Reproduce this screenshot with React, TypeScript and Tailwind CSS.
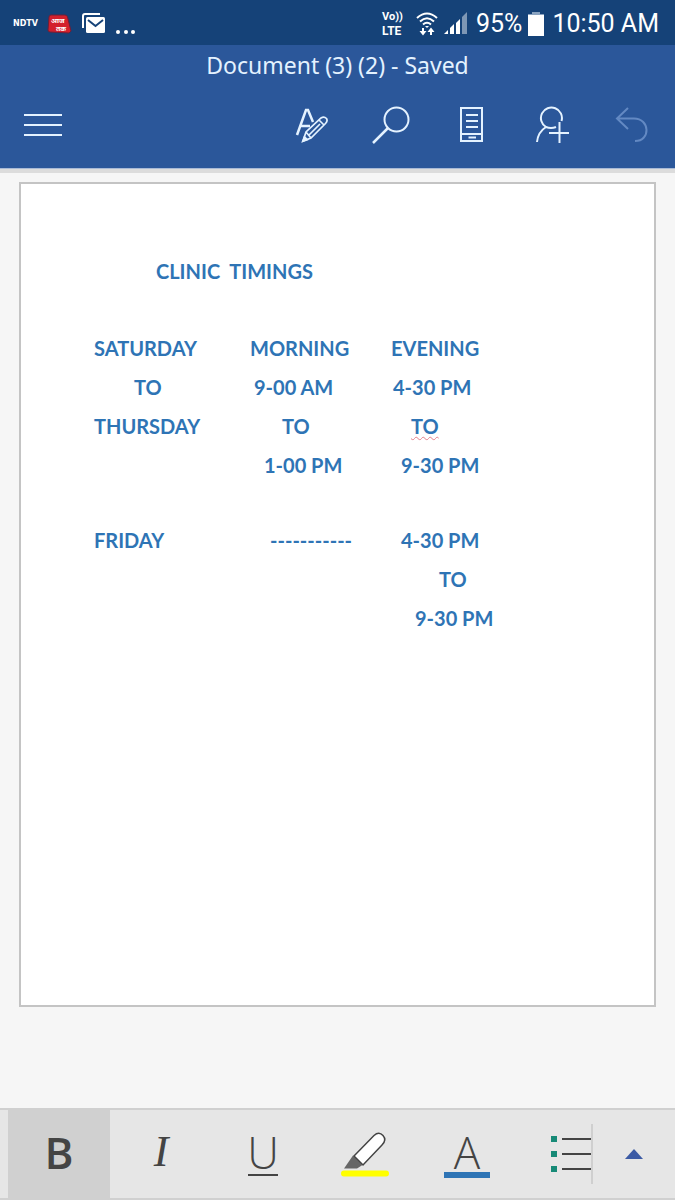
import { useState } from 'react';
import clsx from 'clsx';

interface Entry {
  text: string;
  indent?: string;
  misspelled?: boolean;
}

const weekdays: Entry[][] = [
  [{ text: 'SATURDAY' }, { text: 'MORNING' }, { text: 'EVENING' }],
  [{ text: 'TO', indent: 'pl-10' }, { text: '9-00 AM', indent: 'pl-1' }, { text: '4-30 PM', indent: 'pl-0.5' }],
  [
    { text: 'THURSDAY' },
    { text: 'TO', indent: 'pl-8' },
    { text: 'TO', indent: 'pl-5', misspelled: true },
  ],
  [{ text: '' }, { text: '1-00 PM', indent: 'pl-3.5' }, { text: '9-30 PM', indent: 'pl-2.5' }],
];

const friday: Entry[][] = [
  [{ text: 'FRIDAY' }, { text: '-----------', indent: 'pl-5' }, { text: '4-30 PM', indent: 'pl-2.5' }],
  [{ text: '' }, { text: '' }, { text: 'TO', indent: 'pl-12' }],
  [{ text: '' }, { text: '' }, { text: '9-30 PM', indent: 'pl-6' }],
];

function StatusBar() {
  return (
    <div className="flex h-[45px] items-center justify-between bg-[#154278] pl-[13px] pr-4 pt-0.5 text-white">
      <div className="flex items-center">
        <span className="w-[34px] font-['DejaVu_Sans',sans-serif] text-[8px] font-bold">NDTV</span>
        <svg width="25" height="20" viewBox="0 0 25 20" role="img" aria-label="Aaj Tak">
          <path d="M4 1L18 1Q20 1 20.500 3L24 17L22 19L3 18Q1 18 1 16L2 3Q2 1 4 1Z" fill="#d3202c" stroke="#6d1f38" />
          <text x="4" y="9" fontSize="7" fontWeight="700" fill="#fff" fontFamily="Noto Sans, sans-serif">आज</text>
          <text x="9" y="17" fontSize="7" fontWeight="700" fill="#fff" fontFamily="Noto Sans, sans-serif">तक</text>
        </svg>
        <svg className="ml-2.5" width="24" height="21" viewBox="0 0 24 21" fill="none">
          <path d="M1 15V3Q1 1 3 1H18" stroke="#fff" strokeWidth="2" />
          <rect x="4" y="4" width="19" height="16" rx="1.500" fill="#fff" />
          <path d="M6 7L13.500 13L21 7" stroke="#154278" strokeWidth="2" />
        </svg>
        <svg className="ml-2.5 mt-4" width="20" height="4" viewBox="0 0 20 4" fill="#fff">
          <circle cx="2" cy="2" r="2" />
          <circle cx="10" cy="2" r="2" />
          <circle cx="17" cy="2" r="2" />
        </svg>
      </div>

      <div className="flex items-center font-[Roboto,sans-serif] text-[25px]">
        <div className="flex w-6 flex-col text-[12px] font-bold leading-[14px]">
          <span className="whitespace-nowrap text-[11px]">Vo))</span>
          <span>LTE</span>
        </div>
        <svg className="ml-2.5" width="22" height="24" viewBox="0 0 22 24" fill="none" stroke="#fff" strokeWidth="2">
          <path d="M1 6Q11 -3 21 6" />
          <path d="M4 9.500Q11 3 18 9.500" />
          <path d="M7 12.500Q11 9 15 12.500" />
          <path d="M9 14H13L11 16Z" fill="#fff" stroke="none" />
          <path d="M7 16V20M15 23V19" />
          <path d="M3.500 19H10.500L7 23.500ZM11.500 20H18.500L15 15.500Z" fill="#fff" stroke="none" />
        </svg>
        <svg className="ml-1.5" width="24" height="23" viewBox="0 0 24 23" fill="#fff">
          <path d="M0 22L4 18V22Z" />
          <path d="M6 16L10 12V22H6Z" />
          <path d="M12 11L16 7V22H12Z" />
          <path d="M18 5L23 0V22H18Z" opacity=".45" />
        </svg>
        <span className="ml-2">95%</span>
        <svg className="ml-1.5" width="16" height="24" viewBox="0 0 16 24">
          <path d="M4 0H12V2H16V5H0V2H4Z" fill="#8aa3c0" />
          <path d="M0 3H16V24H0Z" fill="#fff" />
        </svg>
        <span className="ml-2">10:50 AM</span>
      </div>
    </div>
  );
}

function TitleBar() {
  const action = 'flex w-20 items-center justify-center';

  return (
    <header className="border-b border-[#a9bad6] bg-[#2b579a] text-[#e4f2ff]">
      <h1 className="text-center font-['Noto_Sans',sans-serif] text-[23px] leading-10">
        Document (3) (2) - Saved
      </h1>
      <div className="flex h-[83px] items-center justify-between pb-1 pl-6 pr-[3px]">
        <button aria-label="Menu" className="flex flex-col gap-2">
          <span className="h-0.5 w-[38px] bg-current" />
          <span className="h-0.5 w-[38px] bg-current" />
          <span className="h-0.5 w-[38px] bg-current" />
        </button>
        <div className="flex">
          <button aria-label="Edit" className={action}>
            <svg width="34" height="36" viewBox="0 0 34 36" fill="none" stroke="currentColor" strokeWidth="2">
              <path d="M2 28L11 3H13L18 15M6 19H15" strokeWidth="2.500" />
              <path d="M8 34L11 25L26 11Q29 9 31.500 11.500Q33 14 30.500 16.500L16 31L8 34ZM11 25L16 31M24 13L29 18M14 28L25 17" strokeWidth="1.700" />
              <path d="M8 34L9.500 30L12 32.500Z" fill="currentColor" />
            </svg>
          </button>
          <button aria-label="Search" className={action}>
            <svg width="40" height="38" viewBox="0 0 40 38" fill="none" stroke="currentColor" strokeWidth="2">
              <circle cx="24.500" cy="13.500" r="12" />
              <path d="M16 22L1 37" strokeWidth="2.500" />
            </svg>
          </button>
          <button aria-label="Mobile view" className={action}>
            <svg width="24" height="36" viewBox="0 0 24 36" fill="none" stroke="currentColor" strokeWidth="2">
              <path d="M1 1H22V34H1ZM1 27H22M6 8H18M6 14H18M6 20H18M8.500 30.500H16" />
            </svg>
          </button>
          <button aria-label="Share" className={action}>
            <svg width="34" height="38" viewBox="0 0 34 38" fill="none" stroke="currentColor" strokeWidth="2">
              <path d="M26.500 15A10.500 10.500 0 1 0 11 21M11 21Q3 26 2 36M11 21Q16 23 21 21" />
              <path d="M24.500 16V37M14 27H34" />
            </svg>
          </button>
          <button aria-label="Undo" className={clsx(action, 'text-[#6389c3]')}>
            <svg width="34" height="36" viewBox="0 0 34 36" fill="none" stroke="currentColor" strokeWidth="2">
              <path d="M13 1L2 11.500L13 22M2 11.500H19C35 11.500 36 34 20 34" />
            </svg>
          </button>
        </div>
      </div>
    </header>
  );
}

function Rows({ rows }: { rows: Entry[][] }) {
  return (
    <>
      {rows.map((row, r) => (
        <tr key={r} className="h-[39px]">
          {row.map((entry, c) => (
            <td key={c} className={clsx('whitespace-pre p-0', entry.indent)}>
              <span
                className={clsx(
                  entry.misspelled &&
                    'underline decoration-[#e5808a] decoration-wavy decoration-1 underline-offset-2 [text-decoration-skip-ink:none]'
                )}
              >
                {entry.text}
              </span>
            </td>
          ))}
        </tr>
      ))}
    </>
  );
}

function Toolbar() {
  const [bold, setBold] = useState(true);
  const tool = 'flex w-[102px] shrink-0 flex-col items-center pt-[26px]';

  return (
    <div className="flex h-[92px] border-y-2 border-[#d0d0d0] bg-[#e6e6e6] font-['Open_Sans',sans-serif] text-[44px] leading-8 text-[#444]">
      <div className="flex flex-1 overflow-hidden pl-2">
        <button
          aria-pressed={bold}
          onClick={() => setBold(!bold)}
          className={clsx(tool, 'font-semibold', bold && 'bg-[#d0d0d0]')}
        >
          B
        </button>
        <button className={clsx(tool, "font-['Liberation_Serif',serif] italic")}>I</button>
        <button className={clsx(tool, 'font-light')}>
          U
          <span className="mt-1.5 h-0.5 w-[30px] bg-[#444]" />
        </button>
        <button aria-label="Highlight" className="flex w-[102px] shrink-0 items-center justify-center">
          <svg width="48" height="46" viewBox="0 0 48 46">
            <path d="M3 37.500L12 24.500L21.500 34L16 37.500Z" fill="#666" />
            <path d="M13 25L33 4.500Q38 0 42 4.500Q46 9 41 14L22 34Z" fill="#fff" stroke="#444" strokeWidth="1.500" />
            <path d="M3 42.500H45" stroke="#ff0" strokeWidth="6" strokeLinecap="round" />
          </svg>
        </button>
        <button aria-label="Font color" className={clsx(tool, 'font-light')}>
          A
          <span className="mt-1 h-1.5 w-[46px] bg-[#2e74b5]" />
        </button>
        <button aria-label="Bullets" className="flex flex-1 items-center justify-end">
          <svg width="41" height="40" viewBox="0 0 41 40">
            <path d="M1 2H7V8H1ZM1 17H7V23H1ZM1 32H7V38H1Z" fill="#178a77" />
            <path d="M12 5H41M12 20H41M12 35H41" stroke="#444" strokeWidth="2" />
          </svg>
        </button>
      </div>
      <button aria-label="More" className="my-3.5 flex w-[84px] items-center justify-center border-l-2 border-[#cfcfcf]">
        <svg width="18" height="10" viewBox="0 0 18 10">
          <path d="M0 10L9 0L18 10Z" fill="#3c5ba5" />
        </svg>
      </button>
    </div>
  );
}

export default function App() {
  return (
    <div className="flex min-h-screen flex-col bg-[#f6f6f6]">
      <StatusBar />
      <TitleBar />
      <main className="flex flex-1 flex-col border-t-4 border-[#dcdcdc] px-[19px] pb-[101px] pt-[9px]">
        <article className="flex-1 border-2 border-[#c4c4c4] bg-white pl-[73px] pt-[67px] font-[Lato,sans-serif] text-[20px] font-bold text-[#2e74b5]">
          <h2 className="whitespace-pre pl-[62px] leading-10">CLINIC  TIMINGS</h2>
          <table className="mt-[37px] table-fixed border-collapse">
            <colgroup>
              <col className="w-[156px]" />
              <col className="w-[141px]" />
              <col className="w-[141px]" />
            </colgroup>
            <tbody>
              <Rows rows={weekdays} />
              <tr className="h-9" />
              <Rows rows={friday} />
            </tbody>
          </table>
        </article>
      </main>
      <Toolbar />
    </div>
  );
}
